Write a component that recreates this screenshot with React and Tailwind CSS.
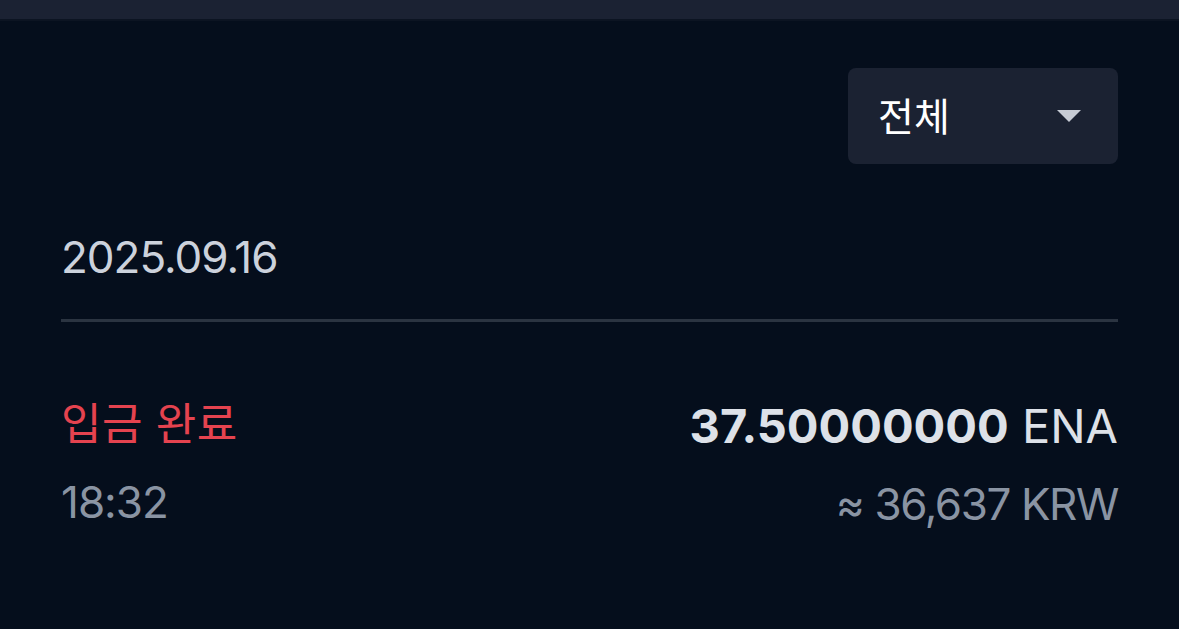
export default function App() {
  return (
    <div className="w-[1179px] h-[629px] bg-[#050e1c] overflow-hidden" style={{ fontFamily: 'Inter, "Noto Sans CJK KR", sans-serif' }}>
      <div className="h-[19px] bg-[#1b2233]"></div>
      <div className="h-[2px] bg-[#0c1422]"></div>
      <div className="px-[61px]">
        <div className="flex justify-end pt-[47px]">
          <div className="w-[270px] h-[96px] rounded-[8px] bg-[#1b2232] flex items-center justify-between pl-[30px] pr-[36px]">
            <span className="text-[39px] text-white leading-none">전체</span>
            <svg width="26" height="14" viewBox="0 0 26 14"><path d="M1 1 L25 1 L13 13 Z" fill="#c7ccd5" /></svg>
          </div>
        </div>
        <div className="mt-[71px] text-[44px] leading-none text-[#ccd2dc] tracking-[-1px]">2025.09.16</div>
        <div className="mt-[40px] h-[3px] bg-[#2b3441]"></div>
        <div className="mt-[80px] flex justify-between">
          <div className="flex flex-col">
            <span className="text-[44px] leading-none text-[#e5434f] tracking-[0.5px]">입금 완료</span>
            <span className="mt-[34px] text-[44px] leading-none text-[#8a94a3] tracking-[-1px]">18:32</span>
          </div>
          <div className="flex flex-col items-end">
            <span className="text-[47px] leading-none text-[#dde1e8]"><span className="font-bold">37.50000000</span> ENA</span>
            <span className="mt-[33px] text-[44px] leading-none text-[#8a94a3] tracking-[-1.4px]">≈ 36,637 KRW</span>
          </div>
        </div>
      </div>
    </div>
  );
}
